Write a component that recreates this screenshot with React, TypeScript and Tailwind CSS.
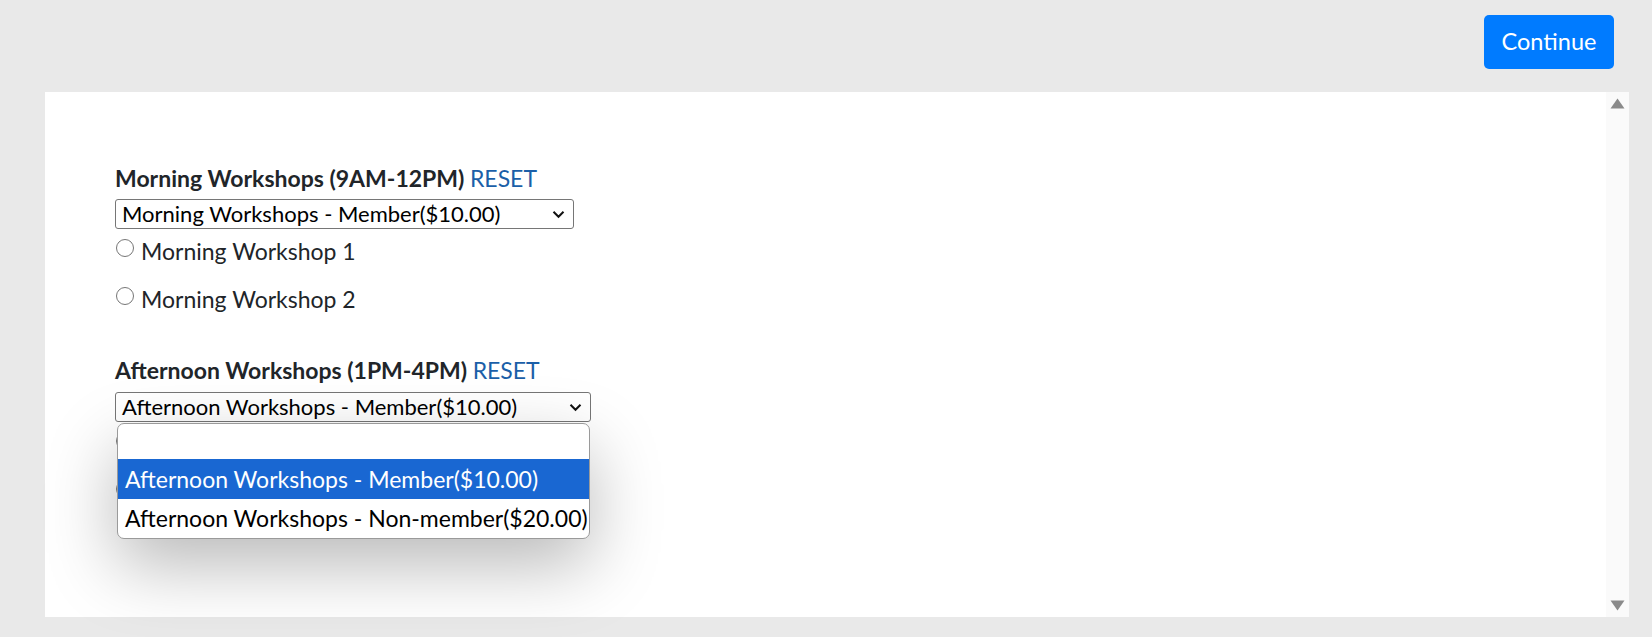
import React from "react";

const font = { fontFamily: "Lato, 'Open Sans', sans-serif" };

function Chevron() {
  return (
    <svg width="13" height="9" viewBox="0 0 13 9" className="shrink-0">
      <path d="M1.5 1.8 L6.5 6.8 L11.5 1.8" fill="none" stroke="#111" strokeWidth="2" />
    </svg>
  );
}

function Radio({ label }: { label: string }) {
  return (
    <div className="flex h-[30px] items-start leading-[30px] text-[23px] text-[#212529]">
      <span className="mt-[3px] ml-[1px] mr-[7px] h-[18px] w-[18px] shrink-0 rounded-full border border-[#767676] bg-white" />
      <span className="whitespace-nowrap">{label}</span>
    </div>
  );
}

function Select({ text, width }: { text: string; width: string }) {
  return (
    <div
      className={`flex h-[30px] items-center justify-between rounded-[3px] border border-[#767676] bg-white pl-[6px] pr-[8px] text-[22px] leading-[28px] text-black ${width}`}
    >
      <span className="whitespace-nowrap">{text}</span>
      <Chevron />
    </div>
  );
}

export default function App() {
  return (
    <div className="flex h-[637px] w-full flex-col bg-[#e9e9e9]" style={font}>
      <div className="flex h-[92px] shrink-0 justify-end pr-[38px] pt-[15px]">
        <button className="h-[54px] w-[130px] rounded-[5px] bg-[#007bff] text-[23.5px] text-white">
          Continue
        </button>
      </div>
      <div className="ml-[45px] mr-[23px] flex h-[525px] shrink-0 bg-white">
        <div className="flex-1 pl-[70px] pt-[71px]">
          <div className="h-[30px] whitespace-nowrap text-[23px] font-bold leading-[30px] text-[#212529]">
            Morning Workshops (9AM-12PM) <span className="font-normal text-[#1b5fa8]">RESET</span>
          </div>
          <div className="mt-[6px]">
            <Select text="Morning Workshops - Member($10.00)" width="w-[459px]" />
          </div>
          <div className="mt-[7px]">
            <Radio label="Morning Workshop 1" />
          </div>
          <div className="mt-[18px]">
            <Radio label="Morning Workshop 2" />
          </div>

          <div className="mt-[41px] h-[30px] whitespace-nowrap text-[23px] font-bold leading-[30px] text-[#212529]">
            Afternoon Workshops (1PM-4PM) <span className="font-normal text-[#1b5fa8]">RESET</span>
          </div>
          <div className="relative mt-[7px]">
            <Select text="Afternoon Workshops - Member($10.00)" width="w-[476px]" />
            <div className="mt-[7px]">
              <Radio label="Afternoon Workshop 1" />
            </div>
            <div className="mt-[18px]">
              <Radio label="Afternoon Workshop 2" />
            </div>
            <div className="absolute left-[2px] top-[31px] w-[473px] overflow-hidden rounded-[7px] border border-[#9a9a9a] bg-white text-[23px] text-black shadow-[0_26px_70px_rgba(0,0,0,0.28)]">
              <div className="h-[35px]" />
              <div className="flex h-[40px] items-center whitespace-nowrap bg-[#1967d2] pl-[7px] text-white">
                Afternoon Workshops - Member($10.00)
              </div>
              <div className="flex h-[39px] items-center whitespace-nowrap pl-[7px]">
                Afternoon Workshops - Non-member($20.00)
              </div>
            </div>
          </div>
        </div>
        <div className="relative flex w-[23px] shrink-0 flex-col items-center justify-between bg-[#fafafa] py-[6px]">
          <svg width="15" height="11" viewBox="0 0 15 11">
            <path d="M7.5 0.5 L14.5 10.5 L0.5 10.5 Z" fill="#8a8a8a" />
          </svg>
          <svg width="15" height="11" viewBox="0 0 15 11">
            <path d="M0.5 0.5 L14.5 0.5 L7.5 10.5 Z" fill="#8a8a8a" />
          </svg>
        </div>
      </div>
    </div>
  );
}
